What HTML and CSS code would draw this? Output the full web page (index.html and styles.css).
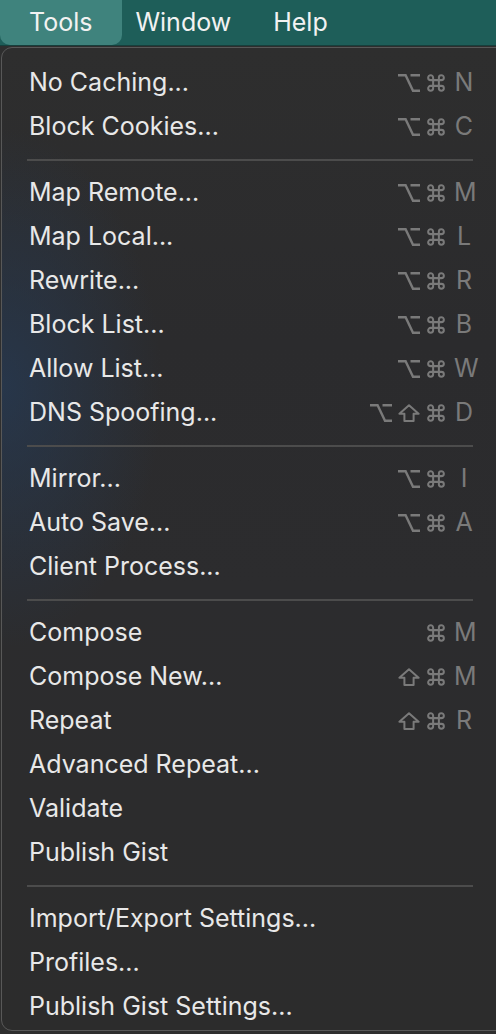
FILE: index.html
```html
<!DOCTYPE html>
<html>
<head>
<meta charset="utf-8">
<link rel="stylesheet" href="styles.css">
</head>
<body>
<svg class="defs" width="0" height="0" aria-hidden="true">
  <symbol id="opt" viewBox="0 0 22 18">
    <path d="M0 1.2 H7.6 L15 16.8 H22 M12.5 1.2 H22" fill="none" stroke="currentColor" stroke-width="2.4"/>
  </symbol>
  <symbol id="cmd" viewBox="0.6 0.6 18.8 18.8">
    <path d="M7 7 V4.4 A2.6 2.6 0 1 0 4.4 7 H15.6 A2.6 2.6 0 1 0 13 4.4 V15.6 A2.6 2.6 0 1 0 15.6 13 H4.4 A2.6 2.6 0 1 0 7 15.6 Z" fill="none" stroke="currentColor" stroke-width="2.1" stroke-linejoin="round"/>
  </symbol>
  <symbol id="shift" viewBox="0 0 22 18">
    <path d="M11 1.3 L20.6 9.8 H15.6 V16.9 H6.4 V9.8 H1.4 Z" fill="none" stroke="currentColor" stroke-width="2" stroke-linejoin="round"/>
  </symbol>
</svg>
<div class="screen">
  <nav class="menubar">
    <div class="mb-item active">Tools</div>
    <div class="mb-item">Window</div>
    <div class="mb-item">Help</div>
  </nav>
  <div class="menu">
    <div class="row"><span class="label">No Caching...</span><span class="sc"><svg class="ic w22"><use href="#opt"/></svg><svg class="ic w20"><use href="#cmd"/></svg><span class="key">N</span></span></div>
    <div class="row"><span class="label">Block Cookies...</span><span class="sc"><svg class="ic w22"><use href="#opt"/></svg><svg class="ic w20"><use href="#cmd"/></svg><span class="key">C</span></span></div>
    <div class="sep"></div>
    <div class="row"><span class="label">Map Remote...</span><span class="sc"><svg class="ic w22"><use href="#opt"/></svg><svg class="ic w20"><use href="#cmd"/></svg><span class="key">M</span></span></div>
    <div class="row"><span class="label">Map Local...</span><span class="sc"><svg class="ic w22"><use href="#opt"/></svg><svg class="ic w20"><use href="#cmd"/></svg><span class="key">L</span></span></div>
    <div class="row"><span class="label">Rewrite...</span><span class="sc"><svg class="ic w22"><use href="#opt"/></svg><svg class="ic w20"><use href="#cmd"/></svg><span class="key">R</span></span></div>
    <div class="row"><span class="label">Block List...</span><span class="sc"><svg class="ic w22"><use href="#opt"/></svg><svg class="ic w20"><use href="#cmd"/></svg><span class="key">B</span></span></div>
    <div class="row"><span class="label">Allow List...</span><span class="sc"><svg class="ic w22"><use href="#opt"/></svg><svg class="ic w20"><use href="#cmd"/></svg><span class="key">W</span></span></div>
    <div class="row"><span class="label">DNS Spoofing...</span><span class="sc"><svg class="ic w22"><use href="#opt"/></svg><svg class="ic w22"><use href="#shift"/></svg><svg class="ic w20"><use href="#cmd"/></svg><span class="key">D</span></span></div>
    <div class="sep"></div>
    <div class="row"><span class="label">Mirror...</span><span class="sc"><svg class="ic w22"><use href="#opt"/></svg><svg class="ic w20"><use href="#cmd"/></svg><span class="key">I</span></span></div>
    <div class="row"><span class="label">Auto Save...</span><span class="sc"><svg class="ic w22"><use href="#opt"/></svg><svg class="ic w20"><use href="#cmd"/></svg><span class="key">A</span></span></div>
    <div class="row"><span class="label">Client Process...</span></div>
    <div class="sep"></div>
    <div class="row"><span class="label">Compose</span><span class="sc"><svg class="ic w20"><use href="#cmd"/></svg><span class="key">M</span></span></div>
    <div class="row"><span class="label">Compose New...</span><span class="sc"><svg class="ic w22"><use href="#shift"/></svg><svg class="ic w20"><use href="#cmd"/></svg><span class="key">M</span></span></div>
    <div class="row"><span class="label">Repeat</span><span class="sc"><svg class="ic w22"><use href="#shift"/></svg><svg class="ic w20"><use href="#cmd"/></svg><span class="key">R</span></span></div>
    <div class="row"><span class="label">Advanced Repeat...</span></div>
    <div class="row"><span class="label">Validate</span></div>
    <div class="row"><span class="label">Publish Gist</span></div>
    <div class="sep"></div>
    <div class="row"><span class="label">Import/Export Settings...</span></div>
    <div class="row"><span class="label">Profiles...</span></div>
    <div class="row"><span class="label">Publish Gist Settings...</span></div>
  </div>
</div>
</body>
</html>
```
FILE: styles.css
```css
html, body {
  margin: 0;
  padding: 0;
  background: #2c2c2c;
}
.defs {
  position: absolute;
  width: 0;
  height: 0;
  overflow: hidden;
}
.screen {
  width: 496px;
  height: 1034px;
  overflow: hidden;
  font-family: Inter, "Liberation Sans", sans-serif;
  background: #2e2e2e;
}
.menubar {
  height: 46px;
  display: flex;
  align-items: stretch;
  background: #1e5e59;
  border-bottom: 1px solid #173f3c;
  box-sizing: border-box;
}
.mb-item {
  color: #f2f2f2;
  font-size: 25px;
  padding: 0 21px 1px;
  display: flex;
  align-items: center;
}
.mb-item.active {
  background: #3f837d;
  border-radius: 0 0 10px 10px;
  padding: 0 30px 1px 29px;
  margin-right: -8px;
}
.menu {
  margin: 1px -20px 0 1px;
  padding: 13px 0 0 0;
  height: 984px;
  background:
    radial-gradient(ellipse 160px 260px at 0px 340px, rgba(38, 58, 84, 0.75), rgba(38, 58, 84, 0) 100%),
    linear-gradient(180deg, #2e2e2e 0%, #2b2b2d 30%, #2c2c2e 55%, #2c2c2c 100%);
  border: 1px solid #585858;
  border-radius: 11px;
  box-sizing: border-box;
}
.row {
  height: 44px;
  display: flex;
  align-items: center;
  padding: 0 0 0 27px;
  width: 472px;
  box-sizing: border-box;
}
.label {
  flex: 1;
  color: #e8e8e8;
  font-size: 25px;
  padding-bottom: 2px;
}
.sc {
  display: flex;
  align-items: center;
  gap: 6px;
  color: #7a7a7a;
  font-size: 25px;
}
.ic {
  height: 18px;
  flex: none;
}
.w22 { width: 22px; }
.w20 { width: 20px; }
.key {
  width: 20px;
  margin-left: 2px;
  text-align: center;
  padding-bottom: 2px;
}
.sep {
  height: 22px;
  display: flex;
  align-items: center;
  margin: 0 0 0 25px;
  width: 446px;
}
.sep::before {
  content: "";
  display: block;
  width: 100%;
  height: 2px;
  background: #4c4c4c;
}
```
